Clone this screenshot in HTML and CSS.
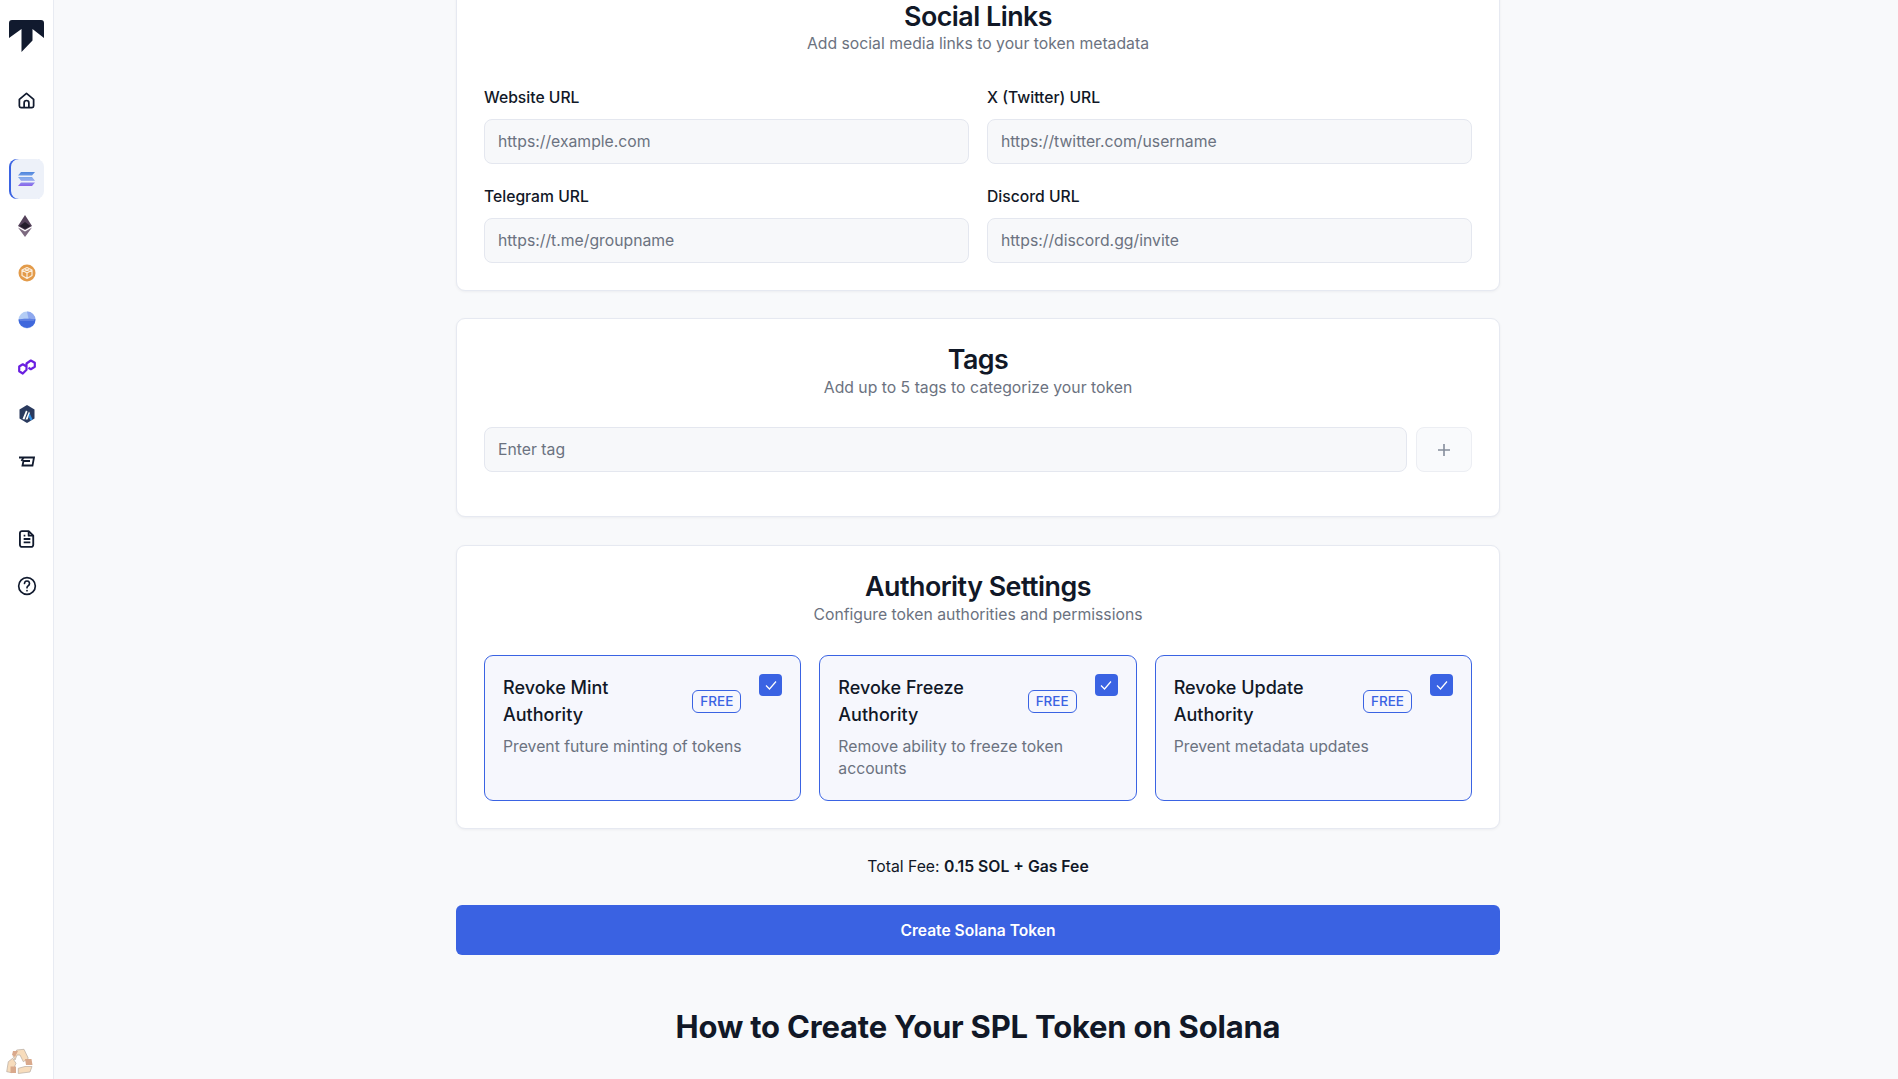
FILE: index.html
```html
<!DOCTYPE html>
<html lang="en">
<head>
<meta charset="utf-8">
<title>Create Solana Token</title>
<link rel="stylesheet" href="styles.css">
</head>
<body>
<div class="app">
  <aside class="sidebar">
    <svg class="logo" width="35" height="32" viewBox="0 0 35 32"><path fill="#111a2e" d="M3 0H32Q35 0 35 3V18L23.500 9V20.500L12.500 32V9L0 18V3Q0 0 3 0Z"/></svg>
    <a class="nav-item"><svg width="19" height="19" viewBox="0 0 24 24" fill="none" stroke="#111a2e" stroke-width="2.200" stroke-linejoin="round"><path d="M3 10.500 12 3l9 7.500V19a2 2 0 0 1-2 2H5a2 2 0 0 1-2-2z"/><path d="M9 21v-6a3 3 0 0 1 6 0v6"/></svg></a>
    <div class="nav-chains">
      <a class="nav-item active"><svg width="17" height="14" viewBox="0 0 17 14"><defs><linearGradient id="sol" x1="0" y1="0" x2="0" y2="1"><stop offset="0" stop-color="#4f86dc"/><stop offset=".5" stop-color="#8fb0ee"/><stop offset="1" stop-color="#8a62ea"/></linearGradient></defs><path fill="url(#sol)" d="M3 0h14l-3 3.600H0zM0 5h14l3 3.800H3zM3 10.400h14L14 14H0z"/></svg></a>
      <a class="nav-item"><svg width="18" height="22" viewBox="0 0 18 22"><path fill="#54415a" d="M7 0 0 11l7 4 7-4z"/><path fill="#7d6a80" d="M0 12.500 7 22l7-9.500-7 4z"/><path fill="#241d2c" d="M7 7 1.500 11 7 14l5.500-3z"/></svg></a>
      <a class="nav-item"><svg width="18" height="18" viewBox="0 0 18 18"><circle cx="9" cy="9" r="8.500" fill="#e39b4a"/><path fill="none" stroke="#fbeedd" stroke-width="1.200" stroke-linejoin="round" d="M9 3.500 14 6v5.500L9 14.500 4 11.500V6zM9 9 4 6M9 9l5-3M9 9v5.500M6.500 4.800 11.500 7.500M11.500 4.800 6.500 7.500"/></svg></a>
      <a class="nav-item"><svg width="18" height="18" viewBox="0 0 18 18"><circle cx="9" cy="9" r="8.500" fill="#b4cdf5"/><path fill="#8ea8ee" d="M9 .5A8.500 8.500 0 0 1 17.500 9H11C10 6 9.500 3 9 .5z"/><path fill="#3f68dc" d="M.5 8.500c3-1 14-1 17 0A8.500 8.500 0 0 1 .5 8.500z"/><path fill="#7d98ea" d="M2 8h14v2H2z" opacity=".5"/></svg></a>
      <a class="nav-item"><svg width="18" height="16" viewBox="0 0 18 16" fill="none" stroke="#6a1fe0" stroke-width="2.200" stroke-linejoin="round"><path d="M1.200 7.500 4.800 5.300 8.500 7.500v3.200L4.800 14.500 1.200 12.200zM8.500 9.500V4.500L12.800 1.500 16.800 3.800v4L12.800 10.200 10.500 8.800"/></svg></a>
      <a class="nav-item"><svg width="16" height="18" viewBox="0 0 16 18"><path fill="#2a3a5e" d="M8 0 15.500 4.500v9L8 18 .5 13.500v-9z"/><path fill="#fff" d="M3.500 14 7 5.500l1.500 1L5.500 14.500zM6.500 14.500 10 6.500l1 2-2.500 6z"/><path fill="#2d8fe8" d="M10.500 8 13.500 14.500l-2 1-2-4z"/></svg></a>
      <a class="nav-item"><svg width="17" height="11" viewBox="0 0 17 11" fill="none" stroke="#111a2e" stroke-width="1.800"><path d="M1 1.500h15L14.500 9.500H4.500L5.500 5H12"/><path d="M5.500 1.500 3.500 5"/></svg></a>
    </div>
    <div class="nav-docs">
      <a class="nav-item"><svg width="20" height="20" viewBox="0 0 24 24" fill="none" stroke="#111a2e" stroke-width="2.200" stroke-linejoin="round"><path d="M6 2.500h8l5.500 5.500V19a2.500 2.500 0 0 1-2.500 2.500H6A2.500 2.500 0 0 1 3.500 19V5A2.500 2.500 0 0 1 6 2.500z"/><path d="M14 2.500V8h5.500M8 12h8M8 16h8M8 8h2"/></svg></a>
      <a class="nav-item"><svg width="20" height="20" viewBox="0 0 24 24" fill="none" stroke="#111a2e" stroke-width="2" stroke-linecap="round"><circle cx="12" cy="12" r="10"/><path d="M9 9a3 3 0 1 1 4.500 2.600c-1 .6-1.500 1.200-1.500 2.400M12 17.500v.1"/></svg></a>
    </div>
    <svg class="recycle" width="28" height="26" viewBox="0 0 28 26"><g stroke="#b8aca2" stroke-width=".7" stroke-linejoin="round"><path fill="#f7dcbc" d="M8.300 8.700 11.700 2 19 1.300 23.300 10.300 18.300 13.700 15 7H12L10 12z"/><path fill="#f7dcbc" d="M1.700 23.700 3.300 13.700 7.700 10.300 11 15.300 6.700 24.700z"/><path fill="#f7dcbc" d="M13.300 20.300 20 18.500H27L25 24 13.300 25.500z"/></g><path fill="#d9a98c" d="M8 3h5l-3 6-3-2zM5.500 18.500H11V25H5.500zM20 11h6.500l1 6H21z"/></svg>
  </aside>
  <main class="main">
    <div class="column">
      <section class="card card-social">
        <header class="card-head">
          <h2>Social Links</h2>
          <p>Add social media links to your token metadata</p>
        </header>
        <div class="field-grid">
          <label class="field"><span>Website URL</span><div class="input">https://example.com</div></label>
          <label class="field"><span>X (Twitter) URL</span><div class="input">https://twitter.com/username</div></label>
          <label class="field"><span>Telegram URL</span><div class="input">https://t.me/groupname</div></label>
          <label class="field"><span>Discord URL</span><div class="input">https://discord.gg/invite</div></label>
        </div>
      </section>
      <section class="card card-tags">
        <header class="card-head">
          <h2>Tags</h2>
          <p>Add up to 5 tags to categorize your token</p>
        </header>
        <div class="tag-row">
          <div class="input tag-input">Enter tag</div>
          <button class="add-btn"><svg width="14" height="14" viewBox="0 0 14 14" stroke="#858d9b" stroke-width="1.600"><path d="M7 1v12M1 7h12"/></svg></button>
        </div>
      </section>
      <section class="card card-auth">
        <header class="card-head">
          <h2>Authority Settings</h2>
          <p>Configure token authorities and permissions</p>
        </header>
        <div class="auth-grid">
          <div class="auth">
            <div class="auth-title"><span class="auth-name">Revoke Mint Authority</span><span class="free">FREE</span></div>
            <p>Prevent future minting of tokens</p>
            <span class="check"><svg width="14" height="14" viewBox="0 0 14 14" fill="none" stroke="#fff" stroke-width="1.200"><path d="M2 7.500 5.500 11 12 3.500"/></svg></span>
          </div>
          <div class="auth">
            <div class="auth-title"><span class="auth-name">Revoke Freeze Authority</span><span class="free">FREE</span></div>
            <p>Remove ability to freeze token accounts</p>
            <span class="check"><svg width="14" height="14" viewBox="0 0 14 14" fill="none" stroke="#fff" stroke-width="1.200"><path d="M2 7.500 5.500 11 12 3.500"/></svg></span>
          </div>
          <div class="auth">
            <div class="auth-title"><span class="auth-name">Revoke Update Authority</span><span class="free">FREE</span></div>
            <p>Prevent metadata updates</p>
            <span class="check"><svg width="14" height="14" viewBox="0 0 14 14" fill="none" stroke="#fff" stroke-width="1.200"><path d="M2 7.500 5.500 11 12 3.500"/></svg></span>
          </div>
        </div>
      </section>
      <p class="total">Total Fee: <strong>0.15 SOL + Gas Fee</strong></p>
      <button class="submit">Create Solana Token</button>
      <h1 class="howto">How to Create Your SPL Token on Solana</h1>
    </div>
  </main>
</div>
</body>
</html>
```

FILE: styles.css
```css
* { box-sizing: border-box; }
html, body { margin: 0; height: 100%; overflow: hidden; }
body { background: #f8f9fb; font-family: Inter, "Liberation Sans", sans-serif; color: #111827; }
.app { display: flex; height: 1079px; overflow: hidden; }
.sidebar { width: 54px; flex: none; background: #fff; border-right: 1px solid #e8ebf2; display: flex; flex-direction: column; align-items: center; position: relative; padding-top: 20px; }
.logo { display: block; margin-bottom: 28px; flex: none; }
.nav-item { width: 35px; height: 40px; display: flex; align-items: center; justify-content: center; flex: none; }
.nav-chains { display: flex; flex-direction: column; gap: 7px; margin-top: 39px; }
.nav-item.active { background: #edf1f9; border-radius: 8px; box-shadow: inset 2px 0 0 #3a63e3; }
.nav-docs { display: flex; flex-direction: column; gap: 7px; margin-top: 38px; }
.recycle { position: absolute; left: 5px; bottom: 5px; }
.main { flex: 1; display: flex; justify-content: center; padding-left: 4px; }
.column { width: 1044px; margin-top: -25px; flex: none; }
.card { background: #fff; border: 1px solid #e6e9f1; border-radius: 9px; box-shadow: 0 1px 3px rgba(17,24,39,.05); padding: 24px 27px 26px; margin-bottom: 28px; }
.card-social { padding-bottom: 27px; margin-bottom: 27px; }
.card-head { text-align: center; margin-bottom: 27px; }
.card-tags .card-head p, .card-auth .card-head p { margin-top: 1px; }
.card-social .card-head { margin-bottom: 30px; }
.card-auth .card-head { margin-bottom: 28px; }
.card-head h2 { margin: 0; font-size: 26.800px; line-height: 32px; font-weight: 600; letter-spacing: -.5px; color: #111827; }
.card-head p { margin: 0; font-size: 15.750px; line-height: 24px; color: #6b7280; }
.field-grid { display: grid; grid-template-columns: 1fr 1fr; gap: 21px 18px; }
.field { display: block; }
.field span { display: block; font-size: 15.700px; line-height: 24px; font-weight: 500; margin-bottom: 9px; }
.input { height: 45px; background: #f7f8fa; border: 1px solid #e4e7ef; border-radius: 8px; padding: 0 13px; display: flex; align-items: center; font-size: 15.750px; color: #6b7280; }
.tag-row { display: flex; gap: 9px; margin-bottom: 18px; }
.tag-input { flex: 1; }
.add-btn { width: 56px; height: 45px; background: #f9fafc; border: 1px solid #eceef3; border-radius: 8px; padding: 0; display: flex; align-items: center; justify-content: center; }
.card-auth { margin-bottom: 26px; padding-bottom: 27px; }
.auth-grid { display: grid; grid-template-columns: repeat(3, 1fr); gap: 18px; }
.auth { position: relative; height: 146px; background: #f6f7fd; border: 1.500px solid #3a63e3; border-radius: 9px; padding: 18px; }
.auth-title { display: flex; align-items: center; justify-content: space-between; margin-right: 41px; }
.auth-name { width: 160px; font-size: 18px; line-height: 27px; font-weight: 500; color: #111827; }
.free { border: 1px solid #3a63e3; border-radius: 6px; font-size: 13.500px; line-height: 21px; padding: 0 7px; color: #3a63e3; font-weight: 500; }
.auth p { margin: 8px 0 0; font-size: 15.750px; line-height: 22px; color: #6b7280; }
.check { position: absolute; top: 18px; right: 18px; width: 23px; height: 22px; background: #3a63e3; border-radius: 4px; display: flex; align-items: center; justify-content: center; }
.total { margin: 0; text-align: center; font-size: 15.750px; line-height: 24px; color: #111827; }
.total strong { font-weight: 600; }
.submit { display: block; width: 100%; height: 50px; margin-top: 26px; background: #3a62e2; color: #fff; border: 0; border-radius: 6px; font: 600 15.600px Inter, "Liberation Sans", sans-serif; }
.howto { margin: 52px 0 0; text-align: center; font-size: 31px; line-height: 40px; font-weight: 700; letter-spacing: -.2px; color: #111827; }
```
